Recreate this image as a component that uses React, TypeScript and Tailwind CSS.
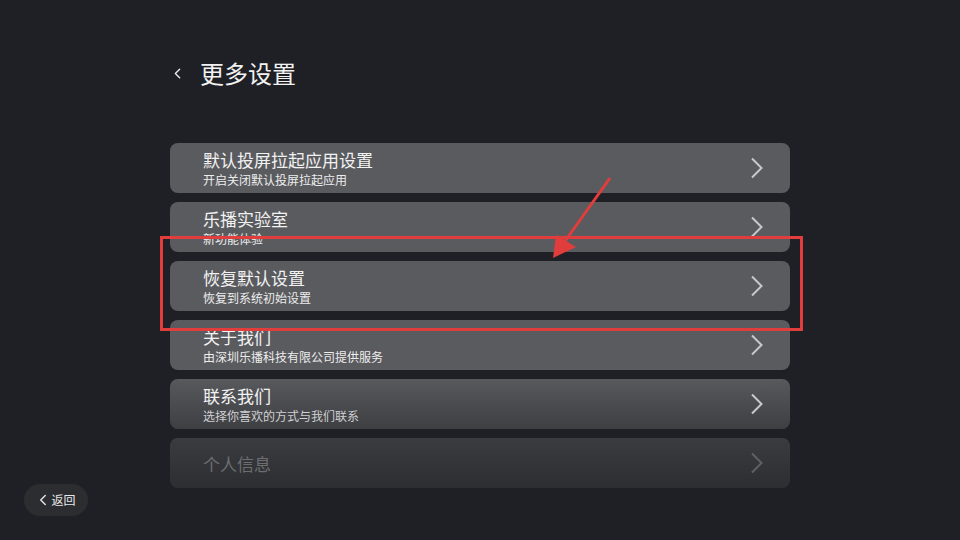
import { ChevronLeft } from 'lucide-react'

interface Row {
  title: string
  sub?: string
  tone: 'solid' | 'fade' | 'dim'
}

const rows: Row[] = [
  { title: '默认投屏拉起应用设置', sub: '开启关闭默认投屏拉起应用', tone: 'solid' },
  { title: '乐播实验室', sub: '新功能体验', tone: 'solid' },
  { title: '恢复默认设置', sub: '恢复到系统初始设置', tone: 'solid' },
  { title: '关于我们', sub: '由深圳乐播科技有限公司提供服务', tone: 'solid' },
  { title: '联系我们', sub: '选择你喜欢的方式与我们联系', tone: 'fade' },
  { title: '个人信息', tone: 'dim' },
]

function Arrow({ color }: { color: string }) {
  return (
    <svg width="14" height="22" viewBox="0 0 14 22" className="shrink-0">
      <polyline points="2,1.5 11.5,11 2,20.5" fill="none" stroke={color} strokeWidth="2" />
    </svg>
  )
}

function SettingRow({ row }: { row: Row }) {
  const bg =
    row.tone === 'solid'
      ? 'bg-[#5a5b5f]'
      : row.tone === 'fade'
      ? 'bg-gradient-to-b from-[#58595d] to-[#3e3f43]'
      : 'bg-gradient-to-b from-[#3b3c40] to-[#2d2e32]'
  const dim = row.tone === 'dim'

  return (
    <div className={`flex h-[50px] items-center rounded-lg pl-[33px] pr-[26px] ${bg}`}>
      <div className="flex flex-1 flex-col">
        <span className={`text-[17px] leading-[21px] ${dim ? 'text-[#6d6e72]' : 'text-[#f2f2f2]'}`}>
          {row.title}
        </span>
        {row.sub && (
          <span className={`mt-[2px] text-[12px] leading-[16px] ${row.tone === 'fade' ? 'text-[#d0d0d2]' : 'text-[#ededed]'}`}>
            {row.sub}
          </span>
        )}
      </div>
      <Arrow color={dim ? '#5f6064' : '#c9c9cb'} />
    </div>
  )
}

export default function App() {
  return (
    <div
      className="relative h-[540px] w-[960px] overflow-hidden bg-[#1f2025]"
      style={{ fontFamily: '"Noto Sans CJK SC", "Noto Sans", sans-serif' }}
    >
      <div className="flex flex-col pl-[169px] pt-[56px]">
        <div className="flex items-center gap-[14px]">
          <ChevronLeft size={17} strokeWidth={2} className="text-[#e8e8e8]" />
          <span className="text-[24px] leading-[34px] text-[#f2f2f2]">更多设置</span>
        </div>

        <div className="ml-[1px] mt-[53px] flex w-[620px] flex-col gap-[9px]">
          {rows.map((r) => (
            <SettingRow key={r.title} row={r} />
          ))}
        </div>
      </div>

      {/* back button */}
      <div className="absolute left-[24px] top-[484px] flex h-[32px] w-[64px] items-center justify-center rounded-full bg-[#2c2d31] pr-[2px]">
        <ChevronLeft size={18} strokeWidth={2} className="-mr-[1px] text-[#e0e0e0]" />
        <span className="text-[12px] leading-[16px] text-[#e8e8e8]">返回</span>
      </div>

      {/* annotation */}
      <div className="pointer-events-none absolute left-[160px] top-[236px] h-[95px] w-[643px] border-[3px] border-[#e23d3d]" />
      <svg className="pointer-events-none absolute left-0 top-0" width="960" height="540">
        <line x1="610" y1="178" x2="563" y2="244" stroke="#e23d3d" strokeWidth="3" />
        <polygon points="553,258 556,235 576,247" fill="#e23d3d" />
      </svg>
    </div>
  )
}
